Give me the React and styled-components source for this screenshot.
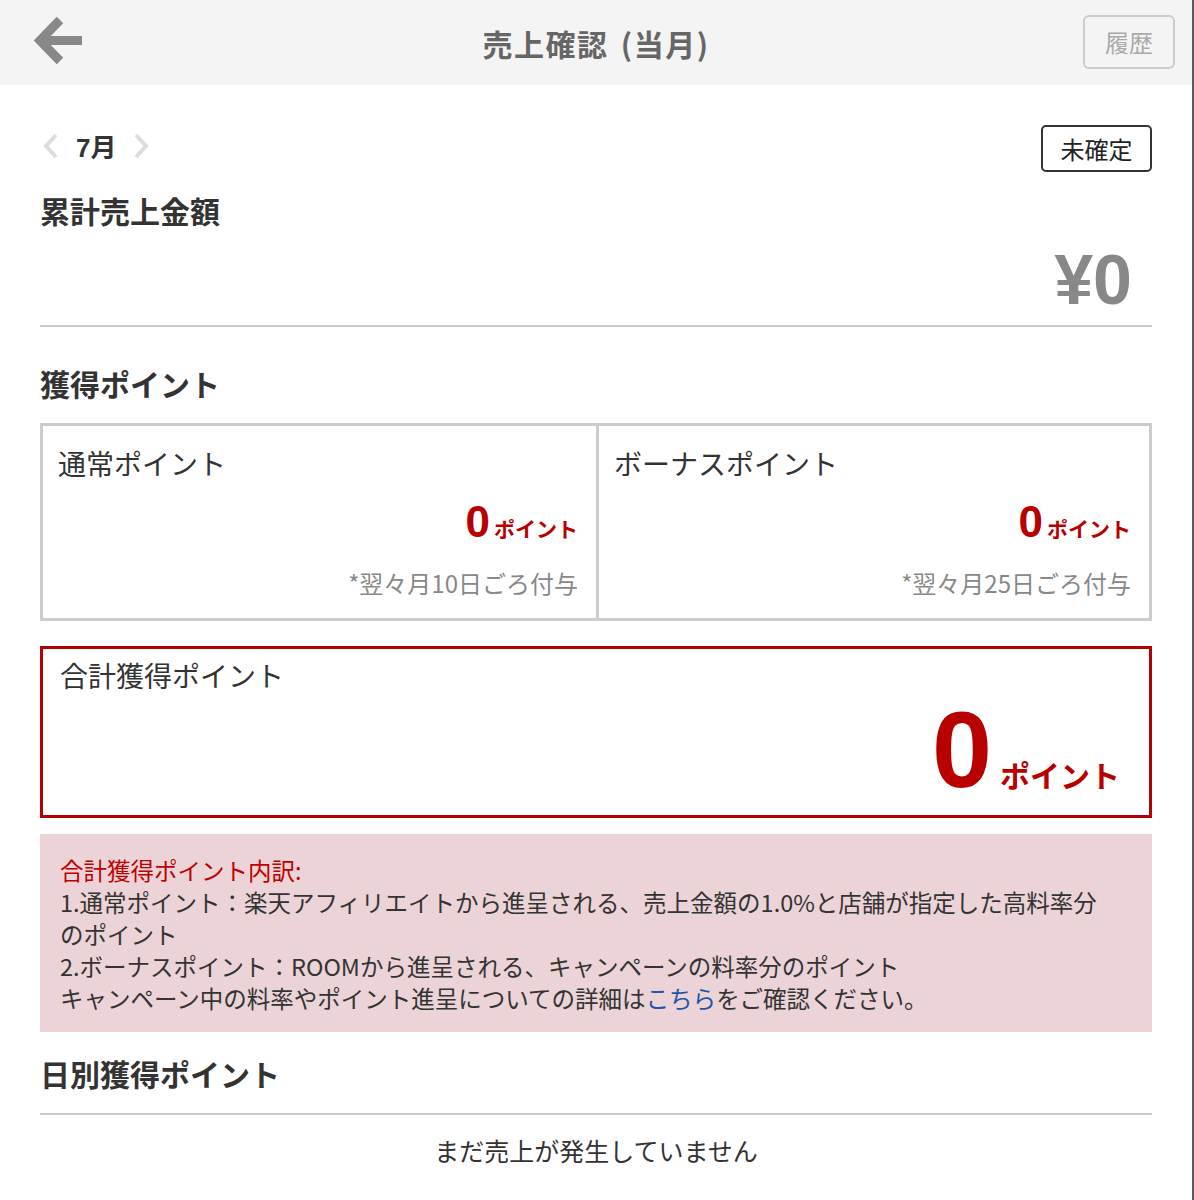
import React from 'react'
import styled, { createGlobalStyle } from 'styled-components';

const GlobalStyle = createGlobalStyle`
    body {
        margin: 0;
        background: #fff;
        font-family: "Noto Sans CJK JP", "Liberation Sans", sans-serif;
        color: #333;
    }
`;

const BackArrow = () => (
    <svg width="52" height="52" viewBox="0 0 52 52">
        <polyline points="27,5 7,25.5 27,46" fill="none" stroke="#888" strokeWidth="9" />
        <line x1="9" y1="25.5" x2="49" y2="25.5" stroke="#888" strokeWidth="9" />
    </svg>
);

const Chevron = ({ dir }) => (
    <svg width="18" height="26" viewBox="0 0 18 26">
        {dir === 'left'
            ? <polyline points="14,2 4,13 14,24" fill="none" stroke="#ddd" strokeWidth="4" />
            : <polyline points="4,2 14,13 4,24" fill="none" stroke="#ddd" strokeWidth="4" />}
    </svg>
);

const App = () => {
    return (
        <Page>
            <GlobalStyle />
            <Header>
                <BackButton><BackArrow /></BackButton>
                <Title>売上確認 (当月)</Title>
                <HistoryButton>履歴</HistoryButton>
            </Header>
            <Main>
                <MonthRow>
                    <MonthNav>
                        <Chevron dir="left" />
                        <MonthLabel>7月</MonthLabel>
                        <Chevron dir="right" />
                    </MonthNav>
                    <StatusBadge>未確定</StatusBadge>
                </MonthRow>
                <SectionTitle>累計売上金額</SectionTitle>
                <Amount>¥0</Amount>
                <Divider />
                <SectionTitle $top={36}>獲得ポイント</SectionTitle>
                <PointGrid>
                    <PointCell>
                        <CellLabel>通常ポイント</CellLabel>
                        <PointValue $size="small"><b>0</b><span>ポイント</span></PointValue>
                        <Note>*翌々月10日ごろ付与</Note>
                    </PointCell>
                    <PointCell>
                        <CellLabel>ボーナスポイント</CellLabel>
                        <PointValue $size="small"><b>0</b><span>ポイント</span></PointValue>
                        <Note>*翌々月25日ごろ付与</Note>
                    </PointCell>
                </PointGrid>
                <TotalBox>
                    <CellLabel>合計獲得ポイント</CellLabel>
                    <PointValue $size="large"><b>0</b><span>ポイント</span></PointValue>
                </TotalBox>
                <InfoBox>
                    <InfoTitle>合計獲得ポイント内訳:</InfoTitle>
                    <div>1.通常ポイント：楽天アフィリエイトから進呈される、売上金額の1.0%と店舗が指定した高料率分<br />のポイント</div>
                    <div>2.ボーナスポイント：ROOMから進呈される、キャンペーンの料率分のポイント</div>
                    <div>キャンペーン中の料率やポイント進呈についての詳細は<InfoLink>こちら</InfoLink>をご確認ください。</div>
                </InfoBox>
                <SectionTitle $top={21}>日別獲得ポイント</SectionTitle>
                <Divider $top={20} />
                <EmptyText>まだ売上が発生していません</EmptyText>
            </Main>
        </Page>
    )
}

const Page = styled.div`
    min-height: 1200px;
    border-right: 2px solid #5a5a5a;
    box-sizing: border-box;
`;

const Header = styled.div`
    height: 85px;
    background: #f4f4f4;
    display: grid;
    grid-template-columns: 1fr auto 1fr;
    align-items: center;
    padding: 0 17px;
`;

const BackButton = styled.div`
    display: flex;
    align-items: center;
    height: 52px;
    margin-top: -4px;
    margin-left: 16px;
`;

const Title = styled.div`
    font-size: 30px;
    font-weight: bold;
    color: #666;
    letter-spacing: 1.5px;
    word-spacing: 4px;
`;

const HistoryButton = styled.div`
    justify-self: end;
    width: 88px;
    height: 50px;
    border: 2px solid #ccc;
    border-radius: 6px;
    display: flex;
    align-items: center;
    justify-content: center;
    font-size: 24px;
    color: #aaa;
    margin-top: -2px;
`;

const Main = styled.div`
    padding: 40px 40px 0 40px;
`;

const MonthRow = styled.div`
    display: flex;
    justify-content: space-between;
    align-items: center;
    height: 47px;
`;

const MonthNav = styled.div`
    display: flex;
    align-items: center;
    gap: 16px;
    margin-left: 2px;
    margin-top: -6px;
`;

const MonthLabel = styled.span`
    font-family: "Liberation Sans", "Noto Sans CJK JP", sans-serif;
    font-size: 26px;
    font-weight: bold;
    color: #333;
`;

const StatusBadge = styled.div`
    width: 107px;
    height: 43px;
    border: 2px solid #333;
    border-radius: 5px;
    display: flex;
    align-items: center;
    justify-content: center;
    font-size: 24px;
    color: #222;
`;

const SectionTitle = styled.div`
    margin-top: ${p => p.$top ?? 18}px;
    font-size: 30px;
    line-height: 40px;
    font-weight: bold;
    color: #333;
`;

const Amount = styled.div`
    margin-top: 10px;
    text-align: right;
    padding-right: 20px;
    font-family: "Liberation Sans", Arial, sans-serif;
    font-size: 70px;
    line-height: 80px;
    font-weight: bold;
    color: #888;
`;

const Divider = styled.div`
    margin-top: ${p => p.$top ?? 5}px;
    height: 2px;
    background: #ccc;
`;

const PointGrid = styled.div`
    margin-top: 20px;
    display: grid;
    grid-template-columns: 1fr 1fr;
    border: 3px solid #ccc;
    & > div + div {
        border-left: 3px solid #ccc;
    }
`;

const PointCell = styled.div`
    padding: 17px 18px 17px 15px;
    display: flex;
    flex-direction: column;
`;

const CellLabel = styled.div`
    font-size: 28px;
    line-height: 40px;
    color: #333;
`;

const PointValue = styled.div`
    display: flex;
    justify-content: flex-end;
    align-items: baseline;
    color: #b80000;
    font-weight: bold;
    margin-top: ${p => (p.$size === 'large' ? 0 : 14)}px;
    height: ${p => (p.$size === 'large' ? 110 : 50)}px;
    b {
        font-family: "Liberation Sans", Arial, sans-serif;
        font-size: ${p => (p.$size === 'large' ? 108 : 44)}px;
        line-height: ${p => (p.$size === 'large' ? 110 : 50)}px;
        margin-right: ${p => (p.$size === 'large' ? 8 : 4)}px;
    }
    span {
        font-size: ${p => (p.$size === 'large' ? 30 : 21)}px;
        line-height: 1;
    }
`;

const Note = styled.div`
    margin-top: 18px;
    text-align: right;
    font-size: 24px;
    line-height: 36px;
    color: #888;
`;

const TotalBox = styled.div`
    margin-top: 25px;
    border: 3px solid #b30000;
    padding: 6px 29px 10px 17px;
`;

const InfoBox = styled.div`
    margin-top: 16px;
    background: #ecd3d7;
    padding: 20px 20px 18px 20px;
    font-size: 23.5px;
    line-height: 32px;
    color: #333;
`;

const InfoTitle = styled.div`
    color: #c00000;
`;

const InfoLink = styled.span`
    color: #1f55a8;
`;

const EmptyText = styled.div`
    margin-top: 17px;
    text-align: center;
    font-size: 25px;
    line-height: 36px;
    color: #333;
`;

export default App
